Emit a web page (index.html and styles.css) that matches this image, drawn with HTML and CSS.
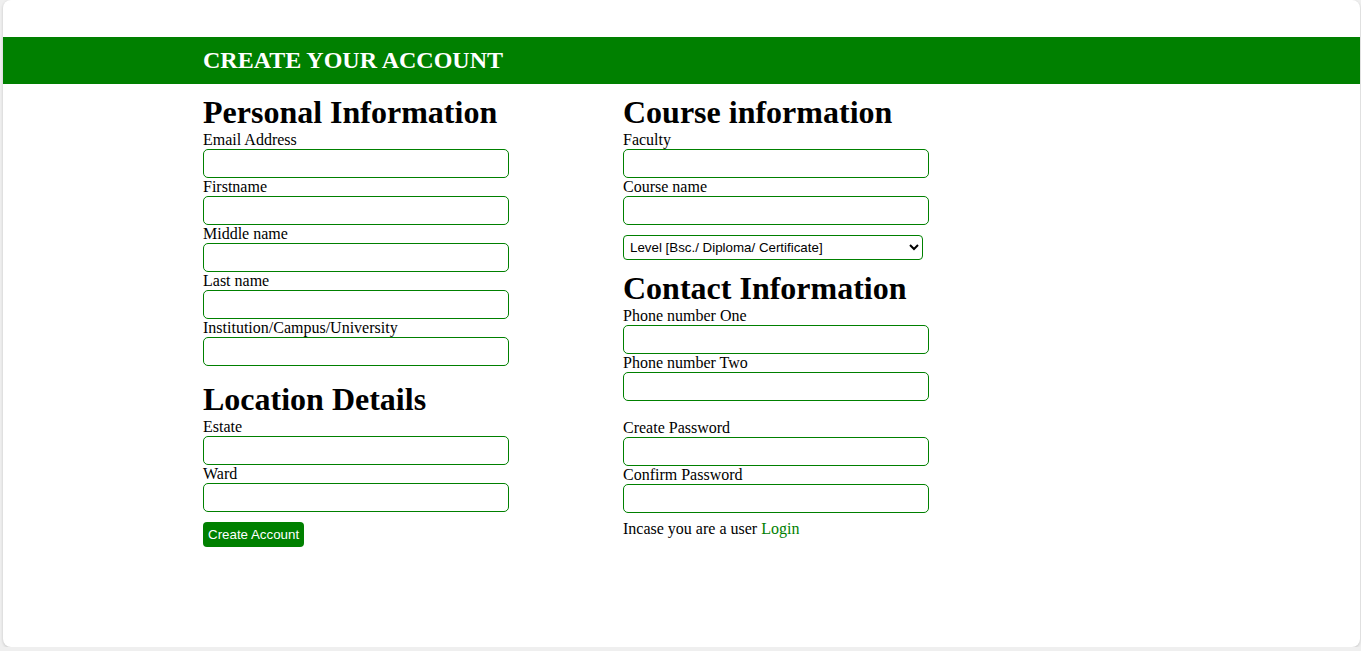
FILE: index.html
```html
<!DOCTYPE html>
<html>
<head>
<meta charset="utf-8">
<title>Create your account</title>
<link rel="stylesheet" href="styles.css">
</head>
<body>
<div class="card">
  <header class="topbar">
    <h2 class="title">CREATE YOUR ACCOUNT</h2>
  </header>
  <form class="form">
    <div class="col">
      <h1 class="heading">Personal Information</h1>
      <label class="lbl">Email Address</label>
      <input class="field" type="text">
      <label class="lbl">Firstname</label>
      <input class="field" type="text">
      <label class="lbl">Middle name</label>
      <input class="field" type="text">
      <label class="lbl">Last name</label>
      <input class="field" type="text">
      <label class="lbl">Institution/Campus/University</label>
      <input class="field" type="text">
      <h1 class="heading heading-loc">Location Details</h1>
      <label class="lbl">Estate</label>
      <input class="field" type="text">
      <label class="lbl">Ward</label>
      <input class="field" type="text">
      <button class="btn" type="button">Create Account</button>
    </div>
    <div class="col">
      <h1 class="heading">Course information</h1>
      <label class="lbl">Faculty</label>
      <input class="field" type="text">
      <label class="lbl">Course name</label>
      <input class="field" type="text">
      <select class="level">
        <option>Level [Bsc./ Diploma/ Certificate]</option>
      </select>
      <h1 class="heading">Contact Information</h1>
      <label class="lbl">Phone number One</label>
      <input class="field" type="text">
      <label class="lbl">Phone number Two</label>
      <input class="field" type="text">
      <label class="lbl lbl-gap">Create Password</label>
      <input class="field" type="password">
      <label class="lbl">Confirm Password</label>
      <input class="field" type="password">
      <p class="note">Incase you are a user <a class="link" href="#">Login</a></p>
    </div>
  </form>
</div>
</body>
</html>
```
FILE: styles.css
```css
html, body {
  margin: 0;
  padding: 0;
}
body {
  background: #efefef;
  font-family: "Liberation Serif", "Times New Roman", serif;
  color: #000;
}
.card {
  margin: 0 1px 0 3px;
  height: 647px;
  background: #fff;
  border-radius: 8px;
  box-shadow: 0 1px 3px rgba(0, 0, 0, 0.18);
  padding-top: 37px;
  box-sizing: border-box;
}
.topbar {
  height: 47px;
  background: #008000;
  display: flex;
  align-items: center;
  padding-left: 200px;
}
.title {
  margin: 0;
  color: #fff;
  font-size: 24px;
  font-weight: bold;
  line-height: 27px;
  padding-bottom: 1px;
}
.form {
  display: grid;
  grid-template-columns: 420px 420px;
  padding-left: 200px;
}
.col {
  display: flex;
  flex-direction: column;
  align-items: flex-start;
}
.heading {
  margin: 10px 0 0;
  font-size: 32px;
  line-height: 37px;
  font-weight: bold;
}
.heading-loc {
  margin-top: 15px;
}
.lbl {
  display: block;
  font-size: 16px;
  line-height: 18px;
}
.lbl-gap {
  margin-top: 18px;
}
.field {
  width: 306px;
  height: 29px;
  box-sizing: border-box;
  border: 1px solid #008000;
  border-radius: 5px;
  margin: 0;
  padding: 2px 6px;
  outline: none;
  background: #fff;
}
.level {
  margin-top: 10px;
  width: 300px;
  height: 25px;
  box-sizing: border-box;
  border: 1px solid #008000;
  border-radius: 4px;
  font-family: "Liberation Sans", Arial, sans-serif;
  font-size: 13.33px;
  color: #000;
  background: #fff;
  padding: 0 2px;
}
.btn {
  margin-top: 10px;
  height: 25px;
  padding: 0 5px;
  background: #008000;
  color: #fff;
  border: none;
  border-radius: 4px;
  font-family: "Liberation Sans", Arial, sans-serif;
  font-size: 13.33px;
}
.note {
  margin: 7px 0 0;
  font-size: 16px;
  line-height: 18px;
}
.link {
  color: #008000;
  text-decoration: none;
}
```
